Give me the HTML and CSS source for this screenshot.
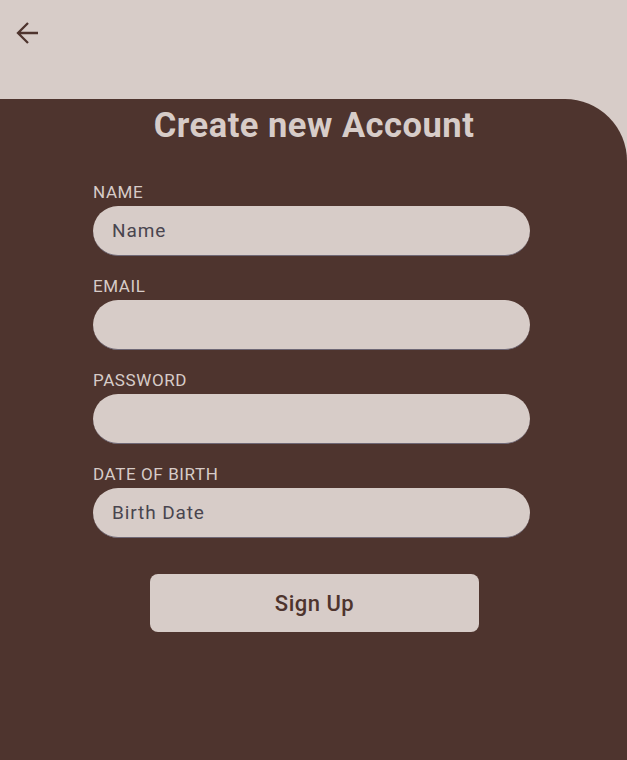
FILE: index.html
```html
<!DOCTYPE html>
<html lang="en">
<head>
<meta charset="utf-8">
<title>Create new Account</title>
<link rel="stylesheet" href="styles.css">
</head>
<body>
<header class="topbar">
  <button class="back" aria-label="Back">
    <svg width="24" height="24" viewBox="0 0 24 24" aria-hidden="true">
      <path d="M4 12H24M14 2L4 12L14 22" fill="none" stroke="#4e342e" stroke-width="2.3" stroke-linecap="butt" stroke-linejoin="miter"/>
    </svg>
  </button>
</header>
<main class="panel">
  <h1 class="title">Create new Account</h1>
  <form class="form">
    <label class="field">
      <span class="label">NAME</span>
      <input class="input" type="text" placeholder="Name">
    </label>
    <label class="field">
      <span class="label">EMAIL</span>
      <input class="input" type="email">
    </label>
    <label class="field">
      <span class="label">PASSWORD</span>
      <input class="input" type="password">
    </label>
    <label class="field">
      <span class="label">DATE OF BIRTH</span>
      <input class="input" type="text" placeholder="Birth Date">
    </label>
    <div class="actions">
      <button class="signup" type="button">Sign Up</button>
    </div>
  </form>
</main>
</body>
</html>
```
FILE: styles.css
```css
* { box-sizing: border-box; }
html, body { margin: 0; padding: 0; }
body {
  background: #d7ccc8;
  font-family: Roboto, "Liberation Sans", sans-serif;
  width: 627px;
  height: 760px;
  overflow: hidden;
  display: flex;
  flex-direction: column;
}
.topbar {
  height: 99px;
  padding: 21px 0 0 14px;
}
.back {
  width: 24px;
  height: 24px;
  padding: 0;
  border: 0;
  background: transparent;
  display: block;
}
.back svg { display: block; width: 24px; height: 24px; }
.panel {
  flex: 1;
  background: #4e342e;
  border-top-right-radius: 62px;
  padding-top: 6px;
  display: flex;
  flex-direction: column;
}
.title {
  margin: 0;
  text-align: center;
  color: #d7ccc8;
  font-size: 34.5px;
  line-height: 40px;
  font-weight: 700;
  letter-spacing: 0.5px;
  padding-left: 1px;
}
.form {
  margin: 37px 0 0 93px;
  width: 437px;
  display: flex;
  flex-direction: column;
  gap: 20px;
}
.field {
  display: flex;
  flex-direction: column;
  gap: 3px;
}
.label {
  color: #d7ccc8;
  font-size: 17px;
  line-height: 21px;
  letter-spacing: 0.6px;
}
.input {
  height: 50px;
  border: 0;
  border-bottom: 1px solid #6f6876;
  border-radius: 25px;
  background: #d7ccc8;
  padding: 0 19px;
  font-family: inherit;
  font-size: 19px;
  letter-spacing: 0.9px;
  color: #49454f;
  outline: none;
}
.input::placeholder { color: #49454f; opacity: 1; }
.actions {
  display: flex;
  justify-content: center;
  padding-top: 16px;
  padding-left: 6px;
}
.signup {
  width: 329px;
  height: 58px;
  border: 0;
  border-radius: 8px;
  background: #d7ccc8;
  color: #4e342e;
  font-family: inherit;
  font-size: 22px;
  font-weight: 500;
  letter-spacing: 0.5px;
}
```
